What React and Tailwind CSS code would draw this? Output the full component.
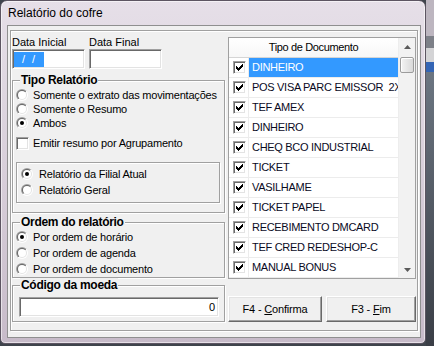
import React, { useId } from "react";

function Radio({ checked }) {
  const id = useId().replace(/[^a-zA-Z0-9]/g, "");
  return (
    <svg width="12" height="12" viewBox="0 0 12 12" className="shrink-0 block">
      <defs>
        <linearGradient id={"ro" + id} x1="0" y1="0" x2="1" y2="1">
          <stop offset="0.5" stopColor="#a0a0a0" />
          <stop offset="0.5" stopColor="#ffffff" />
        </linearGradient>
        <linearGradient id={"ri" + id} x1="0" y1="0" x2="1" y2="1">
          <stop offset="0.5" stopColor="#696969" />
          <stop offset="0.5" stopColor="#e3e3e3" />
        </linearGradient>
      </defs>
      <circle cx="6" cy="6" r="6" fill={`url(#ro${id})`} />
      <circle cx="6" cy="6" r="5" fill={`url(#ri${id})`} />
      <circle cx="6" cy="6" r="4" fill="#fff" />
      {checked && <circle cx="6" cy="6" r="2" fill="#000" />}
    </svg>
  );
}

function Check({ checked }) {
  return (
    <div className="w-[13px] h-[13px] shrink-0 bg-white border border-t-[#a0a0a0] border-l-[#a0a0a0] border-r-white border-b-white shadow-[inset_1px_1px_0_#696969,inset_-1px_-1px_0_#e3e3e3] flex items-center justify-center">
      {checked && (
        <svg width="7" height="7" viewBox="0 0 7 7" className="block">
          <path d="M0 2h1v1h1v1h1V3h1V2h1V1h1V0h1v3H6v1H5v1H4v1H3v1H2V6H1V5H0z" fill="#000" />
        </svg>
      )}
    </div>
  );
}

function RadioRow({ checked, children, gap = "gap-[5px]" }) {
  return (
    <div className={`h-[14px] flex items-center ${gap}`}>
      <Radio checked={checked} />
      <span className="text-[11px] leading-[14px] whitespace-nowrap tracking-[-0.2px]">{children}</span>
    </div>
  );
}

function GroupTitle({ children }) {
  return (
    <div className="-mt-[8px] ml-[7px] w-fit px-[1px] bg-[#f0f0f0] h-[14px] text-[12px] leading-[14px] font-bold tracking-[-0.3px] whitespace-nowrap">
      {children}
    </div>
  );
}

const sunken =
  "bg-white border border-t-[#a0a0a0] border-l-[#a0a0a0] border-b-white border-r-white shadow-[inset_1px_1px_0_#696969,inset_-1px_-1px_0_#e3e3e3]";
const etched = "border border-[#a0a0a0] shadow-[inset_1px_1px_0_#fff,1px_1px_0_#fff]";
const raised =
  "bg-[#f0f0f0] border border-t-white border-l-white border-r-[#696969] border-b-[#696969] shadow-[inset_-1px_-1px_0_#a0a0a0,inset_1px_1px_0_#e3e3e3]";

function Arrow({ up }) {
  return (
    <svg width="7" height="4" viewBox="0 0 7 4" className="block">
      <path d={up ? "M3.5 0L7 4H0z" : "M0 0h7L3.5 4z"} fill="#5a5a5a" />
    </svg>
  );
}

export default function App() {
  const docs = [
    "DINHEIRO",
    "POS VISA PARC EMISSOR  2X",
    "TEF AMEX",
    "DINHEIRO",
    "CHEQ BCO INDUSTRIAL",
    "TICKET",
    "VASILHAME",
    "TICKET PAPEL",
    "RECEBIMENTO DMCARD",
    "TEF CRED REDESHOP-C",
    "MANUAL BONUS",
  ];
  return (
    <div className="w-[434px] h-[346px] flex overflow-hidden bg-[#3f444c] font-['Liberation_Sans',Arial,sans-serif] text-black">
      <div className="w-[426px] h-[344px] shrink-0 flex flex-col rounded-t-[7px] rounded-b-[5px] border border-[#5d5562] bg-gradient-to-b from-[#e6dfe8] via-[#d8cfda] to-[#c7bbc9] shadow-[inset_0_0_0_1px_rgba(255,255,255,0.55)]">
        <div className="h-[24px] shrink-0 flex items-center pl-[7px] text-[12px]">Relatório do cofre</div>
        <div className="ml-[6px] w-[414px] h-[313px] shrink-0 border border-[#8f8f8f] bg-[#f0f0f0]">
          <div className={`ml-[2px] mt-[4px] w-[408px] h-[301px] ${etched} flex pl-[1px] gap-[3px]`}>
            {/* Left column */}
            <div className="w-[213px] flex flex-col">
              <div className="mt-[4px] flex gap-[4px]">
                <div className="w-[73px] flex flex-col">
                  <span className="text-[11px] leading-[14px]">Data Inicial</span>
                  <div className={`h-[20px] ${sunken} flex items-center pl-px`}>
                    <span className="h-[15px] w-[30px] bg-[#3399ff] text-white text-[11px] leading-[15px] flex pl-[8px] gap-[7px]">
                      <span>/</span>
                      <span>/</span>
                    </span>
                  </div>
                </div>
                <div className="w-[73px] flex flex-col">
                  <span className="text-[11px] leading-[14px]">Data Final</span>
                  <div className={`h-[20px] ${sunken}`} />
                </div>
              </div>

              <div className={`mt-[11px] h-[133px] ${etched} flex flex-col`}>
                <GroupTitle>Tipo Relatório</GroupTitle>
                <div className="pl-[3px] pt-[1px] flex flex-col overflow-hidden">
                  <RadioRow>Somente o extrato das movimentações</RadioRow>
                  <RadioRow>Somente o Resumo</RadioRow>
                  <RadioRow checked>Ambos</RadioRow>
                  <div className="mt-[6px] h-[14px] flex items-center gap-[4px]">
                    <Check />
                    <span className="text-[11px] leading-[14px] tracking-[-0.2px]">Emitir resumo por Agrupamento</span>
                  </div>
                </div>
                <div className={`mt-[12px] ml-[3px] w-[204px] h-[41px] ${etched} pl-[4px] pt-[4px] flex flex-col gap-[2px]`}>
                  <RadioRow checked gap="gap-[6px]">Relatório da Filial Atual</RadioRow>
                  <RadioRow gap="gap-[6px]">Relatório Geral</RadioRow>
                </div>
              </div>

              <div className={`mt-[9px] h-[56px] ${etched} flex flex-col`}>
                <GroupTitle>Ordem do relatório</GroupTitle>
                <div className="pl-[3px] pt-[1px] flex flex-col gap-[2px]">
                  <RadioRow checked>Por ordem de horário</RadioRow>
                  <RadioRow>Por ordem de agenda</RadioRow>
                  <RadioRow>Por ordem de documento</RadioRow>
                </div>
              </div>

              <div className={`mt-[7px] h-[37px] ${etched} flex flex-col`}>
                <GroupTitle>Código da moeda</GroupTitle>
                <div className={`mt-[5px] ml-[6px] w-[200px] h-[20px] ${sunken} flex items-center justify-end pr-[3px] text-[11px]`}>
                  0
                </div>
              </div>
            </div>

            {/* Right column */}
            <div className="w-[188px] flex flex-col">
              <div className="mt-[6px] h-[242px] border border-[#a0a0a0] bg-white flex">
                <div className="flex-1 min-w-0 flex flex-col">
                  <div className="h-[20px] shrink-0 border-b border-[#d5d5d5] bg-gradient-to-b from-white to-[#f7f7f7] flex items-center justify-center text-[11px] tracking-[-0.35px]">
                    Tipo de Documento
                  </div>
                  {docs.map((d, i) => (
                    <div key={i} className="h-[20px] shrink-0 flex border-b border-[#ececec]">
                      <div className="w-[20px] shrink-0 border-r border-[#ececec] flex items-center justify-center pl-[1px]">
                        <Check checked />
                      </div>
                      <div
                        className={`flex-1 min-w-0 overflow-hidden whitespace-pre flex items-center pl-[3px] text-[11px] tracking-[-0.3px] ${
                          i === 0 ? "bg-[#3399ff] text-white" : "text-[#0a0a1e]"
                        }`}
                      >
                        {d}
                      </div>
                    </div>
                  ))}
                </div>
                <div className="w-[17px] shrink-0 bg-[#f2f2f2] border-l border-[#ededed] flex flex-col">
                  <div className="h-[17px] flex items-center justify-center">
                    <Arrow up />
                  </div>
                  <div className="mx-[1px] mt-[2px] h-[16px] rounded-[2px] border border-[#9c9c9c] bg-gradient-to-r from-[#f4f4f4] to-[#d9d9d9] shadow-[inset_1px_1px_0_#fff]" />
                  <div className="flex-1" />
                  <div className="h-[17px] flex items-center justify-center">
                    <Arrow />
                  </div>
                </div>
              </div>
              <div className="mt-[17px] h-[26px] flex gap-[4px]">
                <div className={`w-[94px] h-full ${raised} flex items-center justify-center text-[11px] tracking-[-0.2px]`}>
                  F4 - <span className="underline underline-offset-[1px] ml-[3px]">C</span>onfirma
                </div>
                <div className={`w-[90px] h-full ${raised} flex items-center justify-center text-[11px] tracking-[-0.2px]`}>
                  F3 - <span className="underline underline-offset-[1px] ml-[3px]">F</span>im
                </div>
              </div>
            </div>
          </div>
        </div>
      </div>
      <div className="flex-1 flex flex-col">
        <div className="h-[36px] bg-[#bdb6c0]" />
        <div className="h-[12px] bg-[#7d8088]" />
        <div className="h-[14px] bg-[#d4d4d6]" />
        <div className="h-[10px] bg-[#3465b5]" />
        <div className="flex-1 bg-gradient-to-b from-[#6c7682] to-[#3a3e46]" />
      </div>
    </div>
  );
}
